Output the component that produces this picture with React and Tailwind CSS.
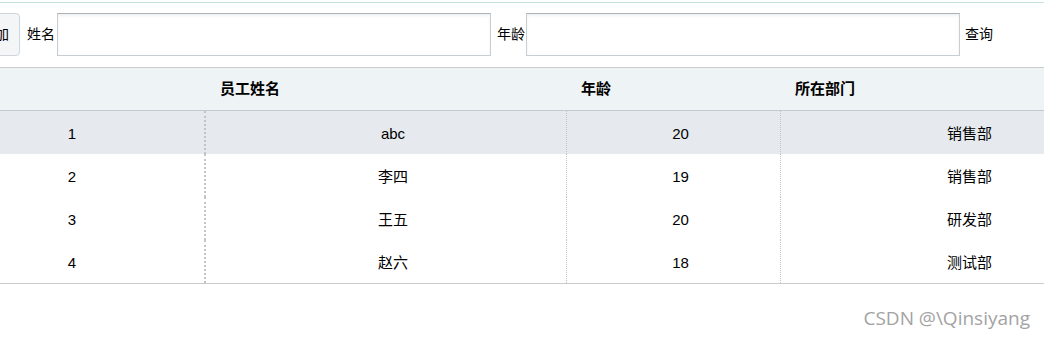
import React from "react"

const rows = [
  { id: 1, name: "abc", age: 20, dept: "销售部" },
  { id: 2, name: "李四", age: 19, dept: "销售部" },
  { id: 3, name: "王五", age: 20, dept: "研发部" },
  { id: 4, name: "赵六", age: 18, dept: "测试部" },
]

const font = { fontFamily: '"Liberation Sans", "Noto Sans CJK SC", sans-serif' }

export default function App() {
  return (
    <div className="w-[1044px] h-[340px] overflow-hidden bg-white text-[14px] text-black" style={font}>
      <div className="mt-[2px] border-t border-[#c4e2e2]" />

      {/* toolbar */}
      <div className="flex items-center h-[43px] mt-[10px]">
        <button className="ml-[-32px] h-[43px] w-[52px] shrink-0 rounded-[4px] border border-[#cfd5da] bg-[#f3f5f7] pl-[12px] text-left">
          添加
        </button>
        <span className="ml-[7px] w-[30px] shrink-0">姓名</span>
        <input className="h-[43px] w-[434px] shrink-0 border border-[#c6ced4] border-t-[#aab2b9] shadow-[inset_0_2px_3px_rgba(0,0,0,0.06)] outline-none" />
        <span className="ml-[6px] w-[29px] shrink-0">年龄</span>
        <input className="h-[43px] w-[434px] shrink-0 border border-[#c6ced4] border-t-[#aab2b9] shadow-[inset_0_2px_3px_rgba(0,0,0,0.06)] outline-none" />
        <span className="ml-[5px] shrink-0">查询</span>
      </div>

      {/* grid */}
      <div className="mt-[11px] ml-[-74px] w-[1218px] border-t border-b border-[#cccccc] text-[15px]">
        <div className="flex h-[43px] items-center bg-[#eef3f6] border-b border-[#c2cad1] font-bold">
          <div className="w-[280px] shrink-0" />
          <div className="w-[361px] shrink-0 pl-[14px]">员工姓名</div>
          <div className="w-[214px] shrink-0 pl-[14px]">年龄</div>
          <div className="w-[363px] shrink-0 pl-[14px]">所在部门</div>
        </div>
        {rows.map((r) => (
          <div key={r.id} className={`flex h-[43px] ${r.id === 1 ? "bg-[#e6eaee]" : "bg-white"}`}>
            <div className="w-[280px] shrink-0 pl-[14px] pt-[3px] flex items-center justify-center border-r-2 border-dotted border-[#c4c4c4]">{r.id}</div>
            <div className="w-[361px] shrink-0 pl-[14px] pt-[3px] flex items-center justify-center border-r border-dotted border-[#c4c4c4]">{r.name}</div>
            <div className="w-[214px] shrink-0 pl-[14px] pt-[3px] flex items-center justify-center border-r border-dotted border-[#c4c4c4]">{r.age}</div>
            <div className="w-[363px] shrink-0 pl-[14px] pt-[3px] flex items-center justify-center">{r.dept}</div>
          </div>
        ))}
      </div>

      <div className="flex justify-end pr-[14px] mt-[20px]">
        <span className="text-[19px] text-[#a3a3a3]" style={{ fontFamily: '"Open Sans", "Noto Sans", sans-serif' }}>
          CSDN @\Qinsiyang
        </span>
      </div>
    </div>
  )
}
